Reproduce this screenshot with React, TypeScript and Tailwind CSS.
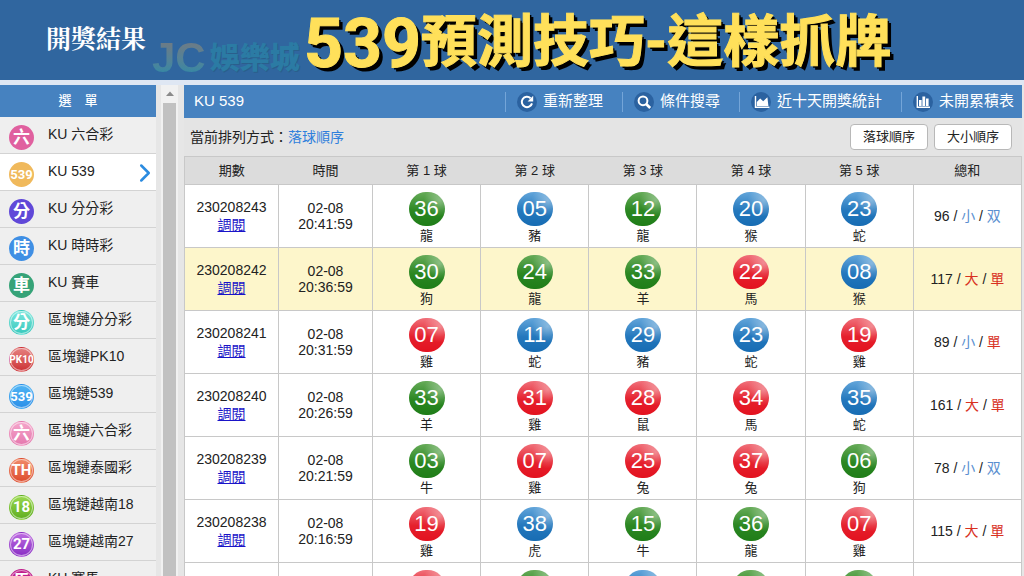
import { ChevronRight } from "lucide-react";
import type { ReactNode } from "react";

type Color = "red" | "green" | "blue";

const MENU = [
  { label: "KU 六合彩", badge: "六", style: "bg-[#e0609f] text-[17px]" },
  { label: "KU 539", badge: "539", style: "bg-[#f0b95c] text-[13px]" },
  { label: "KU 分分彩", badge: "分", style: "bg-[#6048d8] text-[17px]" },
  { label: "KU 時時彩", badge: "時", style: "bg-[#3f8fe4] text-[17px]" },
  { label: "KU 賽車", badge: "車", style: "bg-[#36a378] text-[17px]" },
  {
    label: "區塊鏈分分彩",
    badge: "分",
    style: "bg-linear-to-b from-[#7ae6dc] to-[#35c9bd] border-[#45cfc4] ring-1 ring-inset ring-white/50 text-[17px]",
  },
  {
    label: "區塊鏈PK10",
    badge: "PK10",
    style: "bg-linear-to-b from-[#e58080] to-[#cc2f35] border-[#cf3c40] ring-1 ring-inset ring-white/50 text-[10px]",
  },
  {
    label: "區塊鏈539",
    badge: "539",
    style: "bg-linear-to-b from-[#4fb4f4] to-[#2a8fe8] border-[#3398ea] ring-1 ring-inset ring-white/50 text-[13px]",
  },
  {
    label: "區塊鏈六合彩",
    badge: "六",
    style: "bg-linear-to-b from-[#f4a6cb] to-[#e578ae] border-[#e883b3] ring-1 ring-inset ring-white/50 text-[17px]",
  },
  {
    label: "區塊鏈泰國彩",
    badge: "TH",
    style: "bg-linear-to-b from-[#f08a6a] to-[#dd4a2c] border-[#e05335] ring-1 ring-inset ring-white/50 text-[15px]",
  },
  {
    label: "區塊鏈越南18",
    badge: "18",
    style: "bg-linear-to-b from-[#9ad84e] to-[#5fae1e] border-[#68b428] ring-1 ring-inset ring-white/50 text-[15px]",
  },
  {
    label: "區塊鏈越南27",
    badge: "27",
    style: "bg-linear-to-b from-[#bd6ae0] to-[#8a2cc4] border-[#9638ca] ring-1 ring-inset ring-white/50 text-[15px]",
  },
  {
    label: "KU 賽馬",
    badge: "馬",
    style: "bg-[#c0208c] border-[#c0208c] ring-1 ring-inset ring-white/50 text-[17px]",
  },
];

const BALL_COLORS: Record<Color, string> = {
  green:
    "bg-[radial-gradient(circle_at_85%_25%,rgba(255,255,255,0.35),transparent_40%),linear-gradient(#66ab58,#2b8722_55%,#1f7d18)]",
  blue:
    "bg-[radial-gradient(circle_at_85%_25%,rgba(255,255,255,0.35),transparent_40%),linear-gradient(#62a5da,#2478bd_55%,#176cb3)]",
  red:
    "bg-[radial-gradient(circle_at_85%_25%,rgba(255,255,255,0.35),transparent_40%),linear-gradient(#f0707a,#e5202d_55%,#e3121f)]",
};

// [number, color, zodiac]
type Ball = [string, Color, string];

interface Draw {
  id: string;
  time: string;
  balls: Ball[];
  sum: number;
  size: "大" | "小";
  parity: "單" | "双";
}

const DRAWS: Draw[] = [
  {
    id: "230208243",
    time: "20:41:59",
    balls: [["36", "green", "龍"], ["05", "blue", "豬"], ["12", "green", "龍"], ["20", "blue", "猴"], ["23", "blue", "蛇"]],
    sum: 96,
    size: "小",
    parity: "双",
  },
  {
    id: "230208242",
    time: "20:36:59",
    balls: [["30", "green", "狗"], ["24", "green", "龍"], ["33", "green", "羊"], ["22", "red", "馬"], ["08", "blue", "猴"]],
    sum: 117,
    size: "大",
    parity: "單",
  },
  {
    id: "230208241",
    time: "20:31:59",
    balls: [["07", "red", "雞"], ["11", "blue", "蛇"], ["29", "blue", "豬"], ["23", "blue", "蛇"], ["19", "red", "雞"]],
    sum: 89,
    size: "小",
    parity: "單",
  },
  {
    id: "230208240",
    time: "20:26:59",
    balls: [["33", "green", "羊"], ["31", "red", "雞"], ["28", "red", "鼠"], ["34", "red", "馬"], ["35", "blue", "蛇"]],
    sum: 161,
    size: "大",
    parity: "單",
  },
  {
    id: "230208239",
    time: "20:21:59",
    balls: [["03", "green", "牛"], ["07", "red", "雞"], ["25", "red", "兔"], ["37", "red", "兔"], ["06", "green", "狗"]],
    sum: 78,
    size: "小",
    parity: "双",
  },
  {
    id: "230208238",
    time: "20:16:59",
    balls: [["19", "red", "雞"], ["38", "blue", "虎"], ["15", "green", "牛"], ["36", "green", "龍"], ["07", "red", "雞"]],
    sum: 115,
    size: "大",
    parity: "單",
  },
  {
    id: "230208237",
    time: "20:11:59",
    balls: [["13", "red", "兔"], ["06", "green", "狗"], ["26", "blue", "虎"], ["21", "green", "羊"], ["18", "green", "狗"]],
    sum: 84,
    size: "小",
    parity: "双",
  },
];

const COLUMNS = ["期數", "時間", "第 1 球", "第 2 球", "第 3 球", "第 4 球", "第 5 球", "總和"];

const RefreshIcon = () => (
  <svg viewBox="0 0 20 20" className="size-5" fill="none" stroke="white" strokeWidth="2" aria-hidden="true">
    <path d="M15 11.4A5.2 5.2 0 1 1 13.6 6.2" />
    <path d="M16.2 3.8V9.4h-5.6z" fill="white" stroke="none" />
  </svg>
);

const SearchIcon = () => (
  <svg viewBox="0 0 20 20" className="size-5" fill="none" stroke="white" strokeWidth="2" aria-hidden="true">
    <circle cx="9" cy="8.8" r="4.4" />
    <path d="M12.2 12l4 4" strokeWidth="2.6" />
  </svg>
);

const AreaIcon = () => (
  <svg viewBox="0 0 20 20" className="size-5" aria-hidden="true">
    <path d="M4.5 4v11.3H18.4" fill="none" stroke="white" strokeWidth="1.4" />
    <path d="M5.8 14V10l3.4-3.6 3 2.8L16.4 5.2l1 8.8z" fill="white" />
  </svg>
);

const BarsIcon = () => (
  <svg viewBox="0 0 20 20" className="size-5" fill="white" aria-hidden="true">
    <path d="M3.6 4H5v10.6h12V16H3.6z" />
    <path d="M6 8h2.6v6H6zM9.4 4.6h2.8V14H9.4zM13 6.6h2.6V14H13z" />
  </svg>
);

function ToolButton({ icon, children }: { icon: ReactNode; children: ReactNode }) {
  return (
    <button
      type="button"
      className="flex h-5 items-center gap-1.5 border-l border-[#74a5d8] pl-[11px] pr-[19px] text-[15px] whitespace-nowrap text-white last:pr-2"
    >
      <span className="size-5 rounded-full bg-[#2b62a0]">{icon}</span>
      {children}
    </button>
  );
}

function Header() {
  return (
    <header className="flex h-[85px] shrink-0 items-center border-b-5 border-[#dfe7f3] bg-[#30669f] pl-[46px]">
      <h1 className="mb-1 font-['Noto_Serif_CJK_TC','Noto_Sans_CJK_TC',serif] text-[25px] font-bold whitespace-nowrap text-white">
        開獎結果
      </h1>
      <div className="ml-1.5 flex w-[152px] items-center gap-1 pt-9 leading-none font-bold whitespace-nowrap">
        <span className="bg-linear-to-b from-[#737880] to-[#1f8aaa] bg-clip-text text-[42px] text-transparent">JC</span>
        <span className="text-[30px] font-black text-[#2b7ba4] [text-shadow:1px_1px_0_#2a5f8c]">娛樂城</span>
      </div>
      <h2 className="flex items-center pt-1 font-['Roboto','Noto_Sans_CJK_TC',sans-serif] leading-none font-bold whitespace-nowrap text-[#ffe05a] [-webkit-text-stroke:1px_#ffe05a] [text-shadow:2px_2px_0_#000,4px_4px_0_#000]">
        <span className="pt-1 text-[68px]">539</span>
        <span className="text-[56px]">預測技巧</span>
        <span className="text-[56px]">-</span>
        <span className="text-[56px]">這樣抓牌</span>
      </h2>
    </header>
  );
}

function Sidebar() {
  return (
    <aside className="flex shrink-0">
      <nav className="w-[156px]" aria-label="選單">
        <div className="flex h-8 items-center justify-center bg-[#4682c0] text-[13px] font-medium text-white">
          選　單
        </div>
        <ul>
          {MENU.map((item) => {
            const active = item.label === "KU 539";
            return (
              <li key={item.label} className={`border-b border-[#d3d3d3] ${active ? "bg-white" : "bg-[#efefef]"}`}>
                <a href="#" className="flex h-9 items-start pl-[9px] text-sm leading-[34px] text-[#222]">
                  <span
                    className={`mt-2 mr-[14px] flex size-[25px] shrink-0 items-center justify-center rounded-full border border-transparent font-['Roboto','Noto_Sans_CJK_TC',sans-serif] leading-none font-bold text-white ${item.style}`}
                  >
                    {item.badge}
                  </span>
                  <span className="flex-1 whitespace-nowrap">{item.label}</span>
                  {active && <ChevronRight className="mt-1 -mr-1 size-[30px] text-[#2b8be0]" strokeWidth={2} />}
                </a>
              </li>
            );
          })}
        </ul>
      </nav>
      <div className="ml-[5px] flex w-[17px] flex-col items-center bg-[#f1f1f1]" aria-hidden="true">
        <svg viewBox="0 0 18 18" className="size-[18px] shrink-0" fill="#8a8a8a">
          <path d="M9 6.5l4 4.5H5z" />
        </svg>
        <div className="w-[13px] flex-1 bg-[#c1c1c1]" />
      </div>
    </aside>
  );
}

function DrawRow({ draw, highlight }: { draw: Draw; highlight: boolean }) {
  const cell = "border border-[#c8c8c8] p-0";
  return (
    <tr className={`h-[63px] ${highlight ? "bg-[#fdf6cb]" : "bg-white"}`}>
      <td className={`${cell} leading-[18px]`}>
        {draw.id}
        <br />
        <a href="#" className="text-[#1a14c8] underline">
          調閱
        </a>
      </td>
      <td className={`${cell} leading-4`}>
        02-08
        <br />
        {draw.time}
      </td>
      {draw.balls.map(([num, color, zodiac], i) => (
        <td key={i} className={cell}>
          <div className="flex flex-col items-center pt-1.5">
            <span
              className={`flex h-[34px] w-9 items-center justify-center rounded-full text-[22px] leading-none text-white ${BALL_COLORS[color]}`}
            >
              {num}
            </span>
            <span className="text-[13px] leading-5">{zodiac}</span>
          </div>
        </td>
      ))}
      <td className={cell}>
        {draw.sum} /{" "}
        <span className={draw.size === "大" ? "text-[#d8321f]" : "text-[#5b8fd0]"}>{draw.size}</span> /{" "}
        <span className={draw.parity === "單" ? "text-[#d8321f]" : "text-[#5b8fd0]"}>{draw.parity}</span>
      </td>
    </tr>
  );
}

export default function App() {
  return (
    <div className="flex h-screen flex-col overflow-hidden bg-[#e6e6e6] font-['Liberation_Sans','Noto_Sans_CJK_TC',sans-serif] text-[#222]">
      <Header />
      <div className="flex min-h-0 flex-1">
        <Sidebar />
        <main className="ml-1.5 min-w-0 flex-1 pr-0.5">
          <div className="flex h-[33px] items-center justify-between bg-[#4682c0] pl-[10px] text-white">
            <h3 className="text-[15px]">KU 539</h3>
            <div className="flex">
              <ToolButton icon={<RefreshIcon />}>重新整理</ToolButton>
              <ToolButton icon={<SearchIcon />}>條件搜尋</ToolButton>
              <ToolButton icon={<AreaIcon />}>近十天開獎統計</ToolButton>
              <ToolButton icon={<BarsIcon />}>未開累積表</ToolButton>
            </div>
          </div>
          <div className="flex h-[38px] items-center gap-1.5 bg-[#e4e4e4] pr-[10px] pl-1.5 text-sm">
            <p className="mr-auto">
              當前排列方式：<span className="text-[#2f7fdc]">落球順序</span>
            </p>
            <button type="button" className="h-[26px] w-[78px] rounded-sm border border-[#b8b8b8] bg-white text-[13px]">
              落球順序
            </button>
            <button type="button" className="h-[26px] w-[78px] rounded-sm border border-[#b8b8b8] bg-white text-[13px]">
              大小順序
            </button>
          </div>
          <table className="w-full table-fixed border-collapse text-center text-sm">
            <thead>
              <tr className="h-[28px] border border-[#c8c8c8] bg-[#dcdcdc]">
                {COLUMNS.map((name, i) => (
                  <th key={name} className={`p-0 pt-0.5 text-[13px] font-normal ${i < 2 ? "w-[94px]" : ""}`}>
                    {name}
                  </th>
                ))}
              </tr>
            </thead>
            <tbody>
              {DRAWS.map((draw, i) => (
                <DrawRow key={draw.id} draw={draw} highlight={i === 1} />
              ))}
            </tbody>
          </table>
        </main>
      </div>
    </div>
  );
}
